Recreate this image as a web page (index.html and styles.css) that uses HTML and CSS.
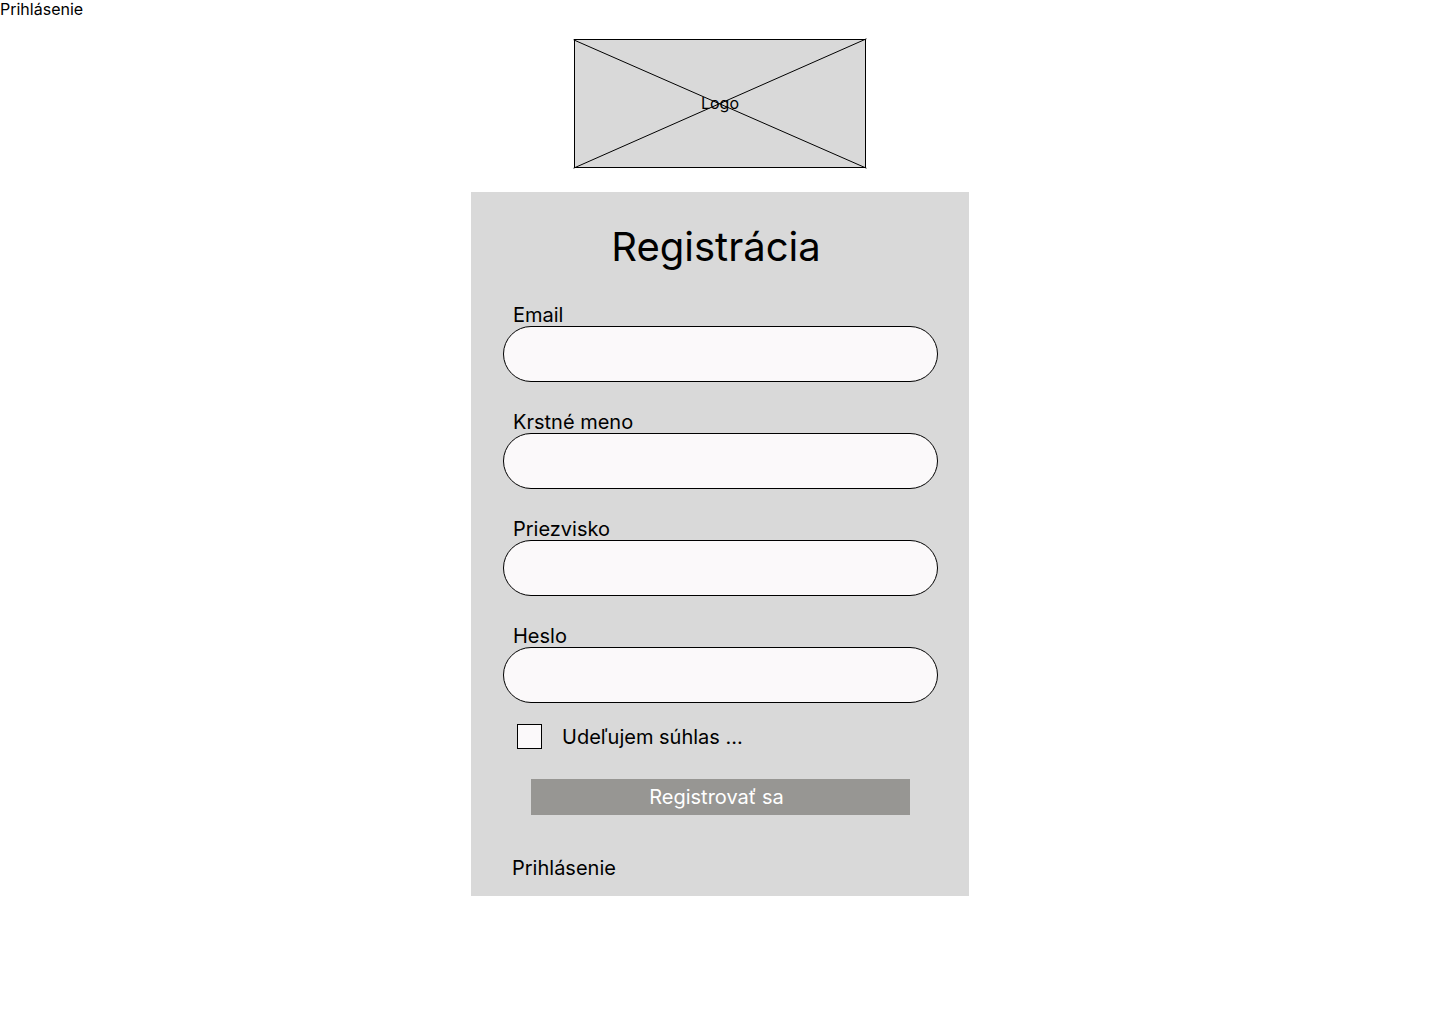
FILE: index.html
```html
<!DOCTYPE html>
<html lang="sk">
<head>
<meta charset="utf-8">
<meta name="viewport" content="width=device-width, initial-scale=1">
<title>Registrácia</title>
<link rel="stylesheet" href="styles.css">
</head>
<body>
<header class="topbar"><a class="link" href="#prihlasenie">Prihlásenie</a></header>
<main class="page">
  <div class="logo">
    <svg class="logo-cross" viewBox="0 0 292 129" aria-hidden="true">
      <path d="M0 1 292 129M0 129 292 0" fill="none" stroke="#000" stroke-linecap="square"/>
    </svg>
    <span class="logo-text">Logo</span>
  </div>
  <form class="card">
    <h1 class="title">Registrácia</h1>
    <div class="field">
      <label class="label" for="email">Email</label>
      <input class="input" id="email" type="email">
    </div>
    <div class="field">
      <label class="label" for="first-name">Krstné meno</label>
      <input class="input" id="first-name" type="text">
    </div>
    <div class="field">
      <label class="label" for="last-name">Priezvisko</label>
      <input class="input" id="last-name" type="text">
    </div>
    <div class="field">
      <label class="label" for="password">Heslo</label>
      <input class="input" id="password" type="password">
    </div>
    <div class="consent">
      <input class="checkbox" id="consent" type="checkbox">
      <label for="consent">Udeľujem súhlas ...</label>
    </div>
    <button class="submit" type="submit">Registrovať sa</button>
    <a class="link card-link" href="#prihlasenie">Prihlásenie</a>
  </form>
</main>
</body>
</html>
```
FILE: styles.css
```css
* {
  box-sizing: border-box;
}

body {
  margin: 0;
  background: #fff;
  color: #000;
  font-family: Inter, sans-serif;
  font-size: 16px;
  line-height: 18px;
}

.link {
  color: inherit;
  text-decoration: none;
}

.topbar {
  height: 20px;
}

.page {
  display: flex;
  flex-direction: column;
  align-items: center;
  gap: 24px;
  padding: 19px 0 24px;
}

.logo {
  position: relative;
  display: flex;
  align-items: center;
  justify-content: center;
  width: 292px;
  height: 129px;
  padding-bottom: 2px;
  border: 1px solid #000;
  background: #d9d9d9;
}

.logo-cross {
  position: absolute;
  inset: -1px;
  width: 292px;
  height: 129px;
  overflow: visible;
}

.logo-text {
  position: relative;
}

.card {
  display: flex;
  flex-direction: column;
  width: 100%;
  max-width: 498px;
  padding: 31px 31px 16px 32px;
  background: #d9d9d9;
  font-size: 20px;
  line-height: 24px;
}

.title {
  margin: 0 9px 33px 0;
  font-size: 40px;
  font-weight: 400;
  line-height: 48px;
  text-align: center;
}

.field {
  display: flex;
  flex-direction: column;
  margin-bottom: 29px;
}

.label {
  padding-left: 10px;
  line-height: 22px;
}

.input {
  width: 100%;
  height: 56px;
  padding: 0 24px;
  border: 1px solid #000;
  border-radius: 28px;
  background: #fbf9fa;
  font: inherit;
}

.consent {
  display: flex;
  align-items: center;
  gap: 20px;
  margin: -8px 0 30px;
  padding-left: 14px;
}

.checkbox {
  appearance: none;
  width: 25px;
  height: 25px;
  margin: 0;
  border: 1px solid #000;
  background: #fbf9fa;
}

.checkbox:checked {
  background: #000;
}

.submit {
  height: 36px;
  margin: 0 28px 41px;
  padding: 0 8px 0 0;
  border: 0;
  background: #979693;
  color: #fff;
  font: inherit;
}

.card-link {
  align-self: flex-start;
  padding-left: 9px;
}
```
